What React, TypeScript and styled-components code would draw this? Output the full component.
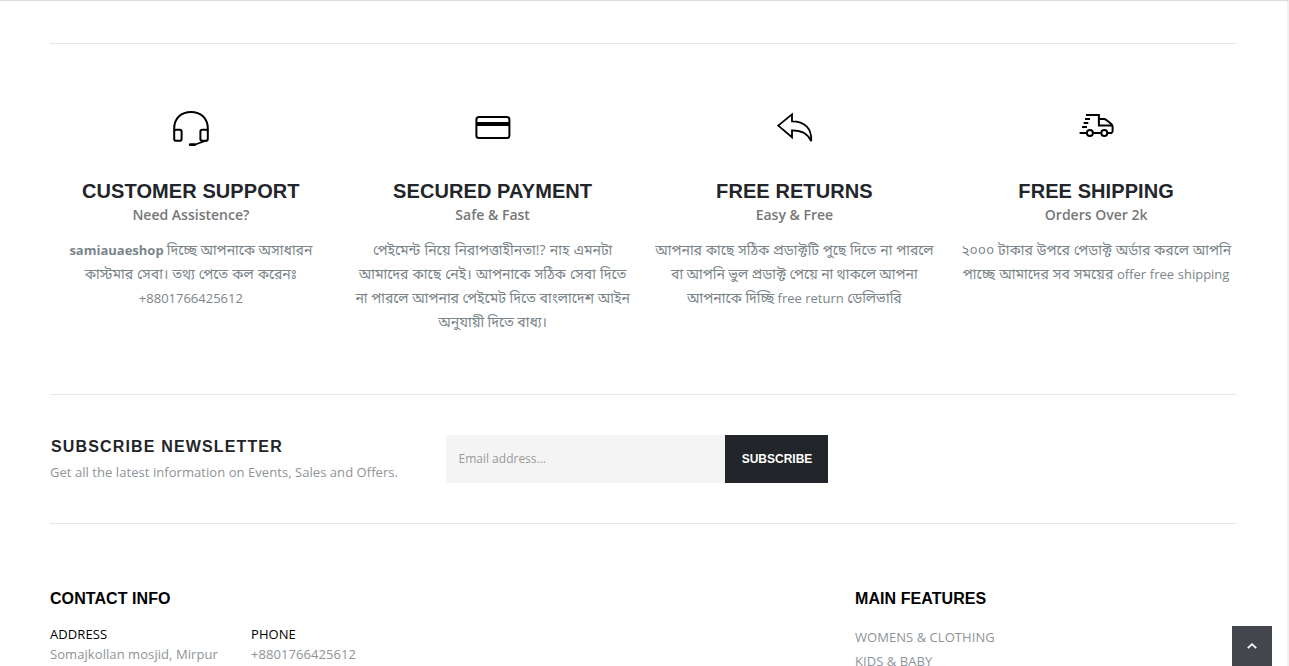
import React from "react";
import styled, { createGlobalStyle } from "styled-components";

const GlobalStyle = createGlobalStyle`
  * { box-sizing: border-box; }
  html, body { margin: 0; height: 666px; overflow: hidden; background: #fff; }
  body { font-family: "Open Sans", "Noto Sans", "Noto Sans Bengali", sans-serif; font-size: 13px; color: #777; }
  h2, h3, h4, h5, p, ul { margin: 0; padding: 0; }
`;

const Page = styled.div`
  height: 666px;
  overflow: hidden;
  border-top: 1px solid #dcdcdc;
  border-right: 2px solid #f0f0f0;
  padding: 42px 50px 0;
`;

const Features = styled.section`
  display: grid;
  grid-template-columns: repeat(4, 1fr);
  margin-right: -10px;
  margin-left: -10px;
  height: 350px;
`;

const Rule = styled.hr`
  height: 1px;
  margin: 0;
  border: 0;
  background: #e7e7e7;
`;

const Feature = styled.article`
  display: flex;
  flex-direction: column;
  align-items: center;
  padding-top: 59px;
  text-align: center;
  white-space: nowrap;
`;

const FeatureIcon = styled.svg`
  display: block;
  width: 50px;
  height: 50px;
  fill: none;
  stroke: #000;
`;

const FeatureTitle = styled.h3`
  margin-top: 27px;
  font: 700 20px/22px "Liberation Sans", Arial, sans-serif;
  letter-spacing: 0.08px;
  color: #222529;
`;

const FeatureSubtitle = styled.h4`
  margin-top: 2px;
  font-size: 14px;
  font-weight: 600;
  line-height: 22px;
  color: #777;
`;

const FeatureText = styled.p`
  margin-top: 12px;
  line-height: 24px;
  color: #7b858a;
`;

const Line = styled.span<{ $wordSpacing: number }>`
  display: block;
  height: 24px;
  word-spacing: ${(p) => p.$wordSpacing}px;
`;

const Bangla = styled.span`
  font-size: 14px;
`;

const Newsletter = styled.section`
  display: flex;
  height: 128px;
  padding-top: 40px;
`;

const NewsletterCopy = styled.div`
  width: 396px;
`;

const NewsletterTitle = styled.h3`
  padding: 1px 0 0 1px;
  font: 700 16px/22px "Liberation Sans", Arial, sans-serif;
  letter-spacing: 1.15px;
  color: #222529;
`;

const NewsletterText = styled.p`
  margin-top: 2px;
  line-height: 24px;
  letter-spacing: 0.055px;
  color: #8d9499;
`;

const Form = styled.form`
  display: flex;
  width: 382px;
  height: 48px;
`;

const EmailInput = styled.input`
  width: 279px;
  padding: 0 12px 1px 12.5px;
  border: 0;
  outline: 0;
  background: #f4f4f4;
  font: 12px "Open Sans", sans-serif;
  &::placeholder { color: #999; opacity: 1; }
`;

const SubscribeButton = styled.button`
  width: 103px;
  padding: 0 0 0 1px;
  border: 0;
  background: #222529;
  color: #fff;
  font: 700 12px "Liberation Sans", Arial, sans-serif;
`;

const Footer = styled.footer`
  display: flex;
  padding-top: 64px;
`;

const Contact = styled.section`
  width: 805px;
`;

const FooterTitle = styled.h3`
  font: 700 16px/22px "Liberation Sans", Arial, sans-serif;
  letter-spacing: 0.07px;
  color: #000;
`;

const ContactList = styled.div`
  display: grid;
  grid-template-columns: 201px 201px;
  margin-top: 14px;
`;

const ContactItem = styled.div`
  line-height: 20px;
  letter-spacing: 0.07px;
  color: #8d9499;
`;

const ContactLabel = styled.div`
  color: #000;
`;

const LinkList = styled.ul`
  margin-top: 15px;
  line-height: 24px;
  letter-spacing: 0.05px;
  list-style: none;
  color: #8d9499;
`;

const ScrollTop = styled.button`
  position: fixed;
  right: 17px;
  bottom: 0;
  display: grid;
  place-items: center;
  width: 40px;
  height: 40px;
  padding: 0;
  border: 0;
  background: #43474d;
`;

const HeadsetIcon = () => (
  <FeatureIcon viewBox="0 0 50 50" strokeWidth="2">
    <path d="M8.2 28V25.5C8.2 15 15.5 9 25 9S41.8 15 41.8 25.5V28" />
    <rect x="8.2" y="26.7" width="7.4" height="11" rx="1.8" />
    <rect x="34.4" y="26.7" width="7.4" height="11" rx="1.8" />
    <path d="M40.5 37.5 28.5 41.8" strokeWidth="1.7" />
    <path d="M24.2 41.7H28.7" strokeWidth="2.8" strokeLinecap="round" />
  </FeatureIcon>
);

const CardIcon = () => (
  <FeatureIcon viewBox="0 0 50 50" strokeWidth="2">
    <rect x="8.4" y="14" width="33" height="21" rx="2.5" />
    <path d="M8.4 21H41.4" strokeWidth="4" />
  </FeatureIcon>
);

const ReturnIcon = () => (
  <FeatureIcon viewBox="0 0 50 50" strokeWidth="1.8">
    <path d="M9.2 22.6 23 11.3V18.3C35.5 18.3 43 25 42.2 38.2C38.5 29.5 32 27.2 23 27.3V34.3Z" />
  </FeatureIcon>
);

const TruckIcon = () => (
  <FeatureIcon viewBox="0 0 50 50" strokeWidth="2">
    <path d="M15 12H27.9V22.5H41.5M27.9 16H32.5C34 16 34.7 16.3 35.7 17.2L40.3 21C41.3 21.9 41.6 22.5 41.6 24V28.5L40.5 30H37M14 16H19M12.6 20H17.3M11 24H16M8.6 30H15.5M22.3 30H29.7" />
    <circle cx="18.9" cy="30" r="3" />
    <circle cx="33.3" cy="30" r="3" />
  </FeatureIcon>
);

const features = [
  {
    Icon: HeadsetIcon,
    title: "CUSTOMER SUPPORT",
    subtitle: "Need Assistence?",
    lines: [
      { gap: -0.2, text: <><b>samiauaeshop</b> <Bangla>দিচ্ছে আপনাকে অসাধারন</Bangla></> },
      { gap: 0.3, text: <Bangla>কাস্টমার সেবা। তথ্য পেতে কল করেনঃ</Bangla> },
      { gap: 0, text: "+8801766425612" },
    ],
  },
  {
    Icon: CardIcon,
    title: "SECURED PAYMENT",
    subtitle: "Safe & Fast",
    lines: [
      { gap: 0.6, text: <Bangla>পেইমেন্ট নিয়ে নিরাপত্তাহীনতা!? নাহ এমনটা</Bangla> },
      { gap: 0.5, text: <Bangla>আমাদের কাছে নেই। আপনাকে সঠিক সেবা দিতে</Bangla> },
      { gap: 0, text: <Bangla>না পারলে আপনার পেইমেট দিতে বাংলাদেশ আইন</Bangla> },
      { gap: -0.3, text: <Bangla>অনুযায়ী দিতে বাধ্য।</Bangla> },
    ],
  },
  {
    Icon: ReturnIcon,
    title: "FREE RETURNS",
    subtitle: "Easy & Free",
    lines: [
      { gap: 0.1, text: <Bangla>আপনার কাছে সঠিক প্রডাক্টটি পুছে দিতে না পারলে</Bangla> },
      { gap: -0.3, text: <Bangla>বা আপনি ভুল প্রডাক্ট পেয়ে না থাকলে আপনা</Bangla> },
      { gap: 0, text: <><Bangla>আপনাকে দিচ্ছি</Bangla> free return <Bangla>ডেলিভারি</Bangla></> },
    ],
  },
  {
    Icon: TruckIcon,
    title: "FREE SHIPPING",
    subtitle: "Orders Over 2k",
    lines: [
      { gap: 0.1, text: <Bangla>২০০০ টাকার উপরে পেডাক্ট অর্ডার করলে আপনি</Bangla> },
      { gap: 0.3, text: <><Bangla>পাচ্ছে আমাদের সব সময়ের</Bangla> offer free shipping</> },
    ],
  },
];

export default function App() {
  return (
    <>
      <GlobalStyle />
      <Page>
        <Rule />
        <Features>
          {features.map(({ Icon, title, subtitle, lines }) => (
            <Feature key={title}>
              <Icon />
              <FeatureTitle>{title}</FeatureTitle>
              <FeatureSubtitle>{subtitle}</FeatureSubtitle>
              <FeatureText>
                {lines.map(({ gap, text }, i) => (
                  <Line key={i} $wordSpacing={gap}>{text}</Line>
                ))}
              </FeatureText>
            </Feature>
          ))}
        </Features>
        <Rule />
        <Newsletter>
          <NewsletterCopy>
            <NewsletterTitle>SUBSCRIBE NEWSLETTER</NewsletterTitle>
            <NewsletterText>Get all the latest information on Events, Sales and Offers.</NewsletterText>
          </NewsletterCopy>
          <Form>
            <EmailInput type="email" placeholder="Email address..." />
            <SubscribeButton type="button">SUBSCRIBE</SubscribeButton>
          </Form>
        </Newsletter>
        <Rule />
        <Footer>
          <Contact>
            <FooterTitle>CONTACT INFO</FooterTitle>
            <ContactList>
              <ContactItem>
                <ContactLabel>ADDRESS</ContactLabel>
                Somajkollan mosjid, Mirpur
              </ContactItem>
              <ContactItem>
                <ContactLabel>PHONE</ContactLabel>
                +8801766425612
              </ContactItem>
            </ContactList>
          </Contact>
          <section>
            <FooterTitle>MAIN FEATURES</FooterTitle>
            <LinkList>
              <li>WOMENS &amp; CLOTHING</li>
              <li>KIDS &amp; BABY</li>
            </LinkList>
          </section>
        </Footer>
      </Page>
      <ScrollTop aria-label="Scroll to top">
        <svg width="12" height="8" viewBox="0 0 12 8" fill="none" stroke="#fff" strokeWidth="1.8">
          <path d="M1.8 6.2 6 2.2 10.2 6.2" />
        </svg>
      </ScrollTop>
    </>
  );
}
